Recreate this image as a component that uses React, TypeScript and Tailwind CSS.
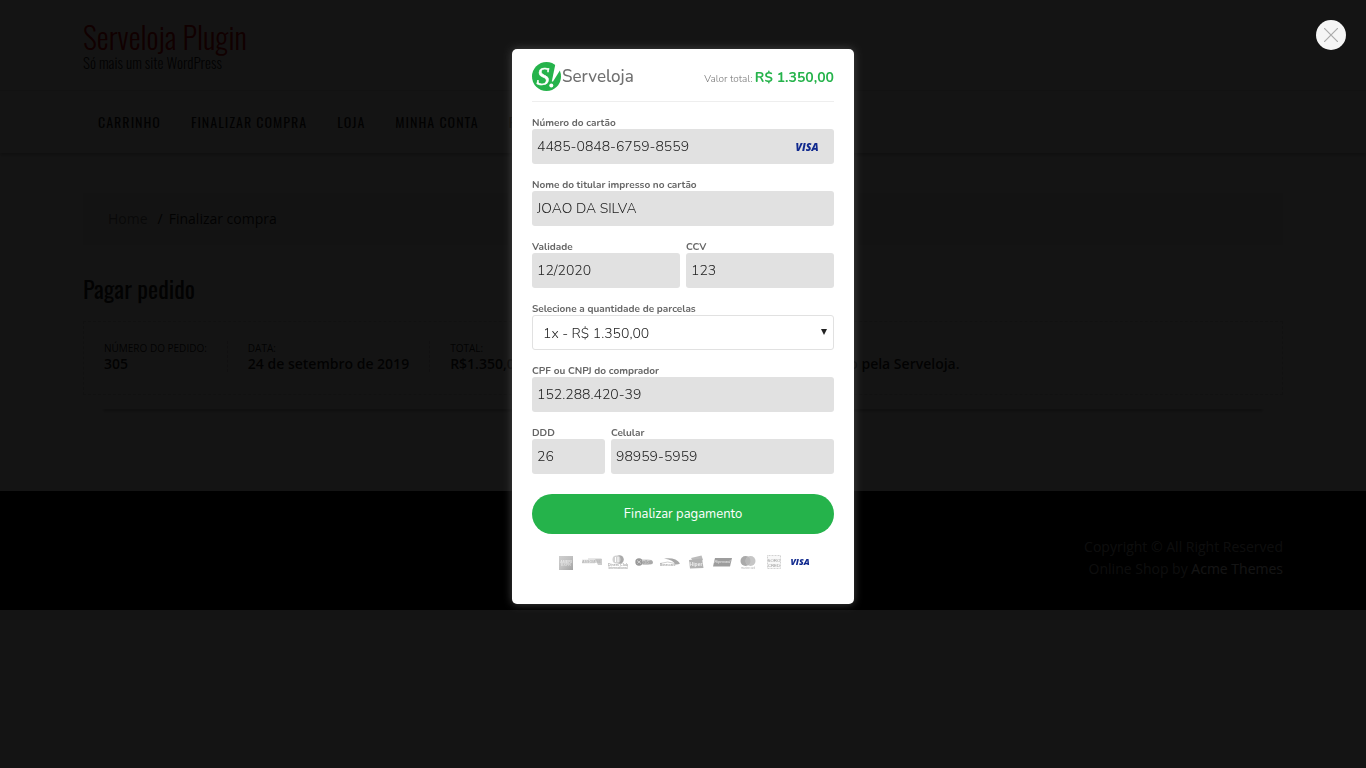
import type { ReactNode } from "react";

const navItems = ["Carrinho", "Finalizar compra", "Loja", "Minha conta", "Página de exemplo"];

const orderDetails = [
  { label: "Número do pedido:", value: "305" },
  { label: "Data:", value: "24 de setembro de 2019" },
  { label: "Total:", value: "R$1.350,00" },
  { label: "Método de pagamento:", value: "Pagamento com cartão de crédito realizado pela Serveloja." },
];

function StorePage() {
  return (
    <div className="min-h-screen bg-white font-['Open_Sans','Noto_Sans',sans-serif] text-sm text-[#222]">
      <header>
        <div className="h-[90px] pt-5">
          <div className="mx-auto max-w-[1200px] font-['Oswald','Liberation_Sans_Narrow','Open_Sans',sans-serif] font-light">
            <a href="#" className="block text-[30px] leading-[34px] text-[#d00000]">
              Serveloja Plugin
            </a>
            <p className="text-[15px] leading-4">Só mais um site WordPress</p>
          </div>
        </div>
        <nav className="border-t border-[#e0e0e0] shadow-[0_2px_4px_rgba(0,0,0,0.3)]">
          <ul className="mx-auto flex h-[62px] max-w-[1200px] items-center gap-[30px] overflow-hidden px-[15px] font-['Oswald','Liberation_Sans_Narrow','Open_Sans',sans-serif] text-sm tracking-[1px] uppercase">
            {navItems.map((item) => (
              <li key={item}>
                <a href="#" className="whitespace-nowrap">{item}</a>
              </li>
            ))}
          </ul>
        </nav>
      </header>

      <main className="mx-auto h-[338px] max-w-[1200px] pt-10">
        <div className="flex h-[52px] items-center gap-1.5 bg-[#f1f1f1] px-[25px]">
          <a href="#" className="mr-1 text-[#777]">Home</a>
          <span>/</span>
          <span>Finalizar compra</span>
        </div>
        <h1 className="mt-6 font-['Oswald','Liberation_Sans_Narrow','Open_Sans',sans-serif] text-2xl leading-[38px]">
          Pagar pedido
        </h1>
        <ul className="mt-3.5 flex h-[74px] items-center border border-dashed border-[#d6d6d6] pb-1 whitespace-nowrap">
          {orderDetails.map((detail) => (
            <li key={detail.label} className="border-r border-dashed border-[#d3ced2] px-5 last:border-r-0">
              <span className="block text-[10px] leading-[14px] uppercase">{detail.label}</span>
              <strong className="block leading-[17px] font-semibold">{detail.value}</strong>
            </li>
          ))}
        </ul>
        <div className="mx-5 mt-3 h-0.5 shadow-[0_2px_3px_rgba(0,0,0,0.4)]" />
      </main>

      <footer className="bg-black">
        <div className="mx-auto h-[119px] max-w-[1200px] pt-[45px] text-right leading-[22px] text-[#aaa]">
          <p>Copyright © All Right Reserved</p>
          <p>
            Online Shop by <a href="#" className="text-white">Acme Themes</a>
          </p>
        </div>
      </footer>
    </div>
  );
}

function LogoMark() {
  return (
    <svg viewBox="0 0 30 30" className="size-[30px]" aria-hidden="true">
      <circle cx="14.5" cy="14.5" r="14.5" fill="#25b34b" />
      <text x="4.500" y="22.500" fontFamily="Liberation Serif, serif" fontStyle="italic" fontWeight="400" fontSize="26" fill="#fff" stroke="#fff" strokeWidth=".5">
        S
      </text>
      <path d="M23.300 2.500 Q26.500 4 28.500 7.500 L21 19.500 L19.800 19.500 Z" fill="#fff" />
      <circle cx="19.300" cy="23.500" r="2" fill="#fff" />
    </svg>
  );
}

function VisaLogo({ className }: { className: string }) {
  return (
    <svg viewBox="0 0 24 16" className={className} role="img" aria-label="Visa">
      <text x="12" y="12" textAnchor="middle" fontFamily="Open Sans, sans-serif" fontStyle="italic" fontWeight="800" fontSize="10.500" fill="#10298e">
        VISA
      </text>
    </svg>
  );
}

function Brand({ name, children }: { name: string; children: ReactNode }) {
  return (
    <svg viewBox="0 0 20 16" className="h-4 w-5" role="img" aria-label={name} fontFamily="Liberation Sans, sans-serif">
      {children}
    </svg>
  );
}

function CardBrands() {
  return (
    <div className="flex justify-center gap-1.5">
      <Brand name="American Express">
        <defs>
          <linearGradient id="amex" x1="0" y1="0" x2="1" y2="1">
            <stop offset="0" stopColor="#cfcfcf" />
            <stop offset="0.5" stopColor="#c0c0c0" />
            <stop offset="1" stopColor="#a2a2a2" />
          </linearGradient>
        </defs>
        <rect x="3" y="2" width="14" height="14" fill="url(#amex)" />
        <text x="10" y="9" textAnchor="middle" fontSize="3.600" fontWeight="700" fill="#fff" opacity=".6">AMERI</text>
        <text x="10" y="12" textAnchor="middle" fontSize="3.600" fontWeight="700" fill="#fff" opacity=".5">EXPR</text>
      </Brand>
      <Brand name="Assomise">
        <path d="M0 5.500h13v4H0z" fill="#e9e9e9" />
        <path d="M6 4.500h13.500v1H6z" fill="#d0d0d0" />
        <text x="0" y="9.200" fontSize="3.600" fontWeight="700" fill="#b4b4b4">ASSOMISE</text>
        <path d="M13 5h7v6h-4z" fill="#b8b8b8" opacity=".7" />
      </Brand>
      <Brand name="Diners Club">
        <circle cx="11.500" cy="5.500" r="4.300" fill="#aaa" />
        <circle cx="8.500" cy="5.500" r="4" fill="#d2d2d2" />
        <path d="M7.500 3v5M10 3v5" stroke="#fff" strokeWidth="1" />
        <text x="10" y="12" textAnchor="middle" fontSize="3.600" fontWeight="700" fill="#aaa">Diners Club</text>
        <text x="10" y="15.300" textAnchor="middle" fontSize="3.200" fontWeight="700" fill="#aaa">International</text>
      </Brand>
      <Brand name="Elo">
        <circle cx="5" cy="8" r="3.700" fill="#999" />
        <path d="M3 6.500l4 3M3.500 9.500l3-3" stroke="#ddd" strokeWidth=".8" />
        <path d="M8 5.500h6l3.500.5q2 1.500 1 4L14 11H8.500z" fill="#ccc" />
        <text x="8" y="10" fontSize="6" fontWeight="700" fill="#999">elo</text>
        <circle cx="16.800" cy="8.200" r="2" fill="#aaa" />
      </Brand>
      <Brand name="Banescard">
        <path d="M4 4.500Q16 3 20 9.500q-1.500 1.300-5 1Q14 6 4 4.500z" fill="#a8a8a8" />
        <path d="M0 9.500q8-3 15 0" fill="none" stroke="#d0d0d0" strokeWidth="1" />
        <text x="0" y="11.500" fontSize="3" fontWeight="700" fill="#aaa">Banescard</text>
      </Brand>
      <Brand name="Hiper">
        <path d="M5 4L15.500 1.500 17 6 8 9z" fill="#bbb" />
        <path d="M3 6l13-1.500 1.500 9.500L4 14.500z" fill="#b2b2b2" />
        <text x="10" y="11.500" textAnchor="middle" fontSize="5" fontWeight="700" fill="#eee">Hiper</text>
      </Brand>
      <Brand name="Hipercard">
        <path d="M3 4h17l-2 8.500H1z" fill="#9d9d9d" />
        <text x="10.500" y="9.300" textAnchor="middle" fontSize="3.400" fontStyle="italic" fontWeight="700" fill="#ddd">Hipercard</text>
      </Brand>
      <Brand name="Mastercard">
        <circle cx="7.500" cy="7" r="5" fill="#aaa" />
        <circle cx="12.500" cy="7" r="5" fill="#c6c6c6" />
        <path d="M10 2.700a5 5 0 0 1 0 8.600a5 5 0 0 1 0-8.600z" fill="#b8b8b8" />
        <text x="10" y="14.500" textAnchor="middle" fontSize="2.800" fill="#b5b5b5">mastercard</text>
      </Brand>
      <Brand name="Sorocred">
        <rect x="3.500" y="1.500" width="13" height="13" fill="#f8f8f8" stroke="#d2d2d2" strokeDasharray="1 .5" />
        <text x="10" y="7.800" textAnchor="middle" fontSize="4.400" fill="#999">SORO</text>
        <text x="10" y="12.500" textAnchor="middle" fontSize="4.400" fill="#999">CRED</text>
      </Brand>
      <VisaLogo className="h-4 w-5" />
    </div>
  );
}

const labelStyle = "block pt-px text-[10px] leading-3 font-bold text-[#666]";

function Field({ id, label, value, className = "", children }: { id: string; label: string; value: string; className?: string; children?: ReactNode }) {
  return (
    <div className={className}>
      <label htmlFor={id} className={labelStyle}>{label}</label>
      <div className="flex h-[35px] items-center rounded-[3px] bg-[#e1e1e1] px-[5px]">
        <input
          id={id}
          type="text"
          defaultValue={value}
          className="w-full min-w-0 flex-1 bg-transparent text-sm font-light text-[#222] outline-none"
        />
        {children}
      </div>
    </div>
  );
}

function PaymentModal() {
  return (
    <div
      role="dialog"
      aria-label="Pagamento Serveloja"
      className="w-full max-w-[342px] rounded-[5px] bg-white px-5 pt-3 pb-[34px] font-['Nunito','Open_Sans',sans-serif] shadow-[0_0_8px_#444]"
    >
      <div className="flex h-[41px] items-start justify-between border-b border-[#eee]">
        <div className="flex items-center pt-px">
          <LogoMark />
          <span className="text-[17px] leading-[30px] font-medium text-[#707070]">Serveloja</span>
        </div>
        <p className="text-[10px] leading-9 font-light text-[#777]">
          Valor total: <strong className="text-sm font-bold text-[#25b34b]">R$ 1.350,00</strong>
        </p>
      </div>

      <form className="mt-3.5 flex flex-col gap-3.5" onSubmit={(event) => event.preventDefault()}>
        <Field id="card-number" label="Número do cartão" value="4485-0848-6759-8559">
          <VisaLogo className="mr-2.5 h-4 w-6" />
        </Field>
        <Field id="card-holder" label="Nome do titular impresso no cartão" value="JOAO DA SILVA" />
        <div className="flex gap-1.5">
          <Field id="expiry" label="Validade" value="12/2020" className="flex-1" />
          <Field id="ccv" label="CCV" value="123" className="flex-1" />
        </div>
        <div>
          <label htmlFor="installments" className={labelStyle}>Selecione a quantidade de parcelas</label>
          <div className="relative">
            <select
              id="installments"
              className="block h-[35px] w-full appearance-none rounded-[3px] border border-[#e1e1e1] bg-white px-2.5 pt-0.5 text-sm font-light text-[#222]"
            >
              <option>1x - R$ 1.350,00</option>
            </select>
            <svg viewBox="0 0 6 6" className="pointer-events-none absolute top-3.5 right-[7px] size-1.5" aria-hidden="true">
              <path d="M0 0h6L3 6z" fill="#222" />
            </svg>
          </div>
        </div>
        <Field id="document" label="CPF ou CNPJ do comprador" value="152.288.420-39" />
        <div className="flex gap-1.5">
          <Field id="ddd" label="DDD" value="26" className="w-[73px]" />
          <Field id="phone" label="Celular" value="98959-5959" className="flex-1" />
        </div>
        <button type="submit" className="mt-1.5 h-10 rounded-full bg-[#25b34b] pt-0.5 text-[13px] text-white">
          Finalizar pagamento
        </button>
      </form>

      <div className="mt-5">
        <CardBrands />
      </div>
    </div>
  );
}

export default function App() {
  return (
    <div className="relative">
      <StorePage />
      <div className="fixed inset-0 flex items-start justify-center overflow-auto bg-black/92 pt-[49px]">
        <PaymentModal />
        <button
          type="button"
          aria-label="Fechar"
          className="absolute top-5 right-5 flex size-[30px] items-center justify-center rounded-full bg-[#f5f5f5]"
        >
          <svg viewBox="0 0 14 14" className="size-3.5" aria-hidden="true">
            <path d="M0 0L14 14M14 0L0 14" stroke="#aaa" strokeWidth="1.200" />
          </svg>
        </button>
      </div>
    </div>
  );
}
